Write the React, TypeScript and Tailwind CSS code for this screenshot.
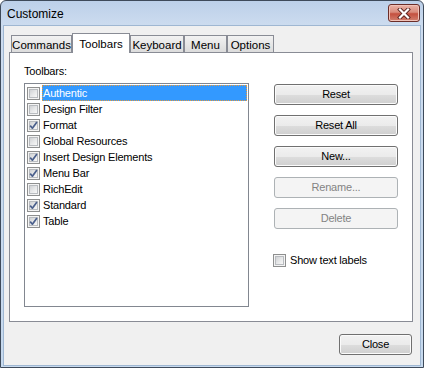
import React from "react";

const items: { label: string; checked: boolean }[] = [
  { label: "Authentic", checked: false },
  { label: "Design Filter", checked: false },
  { label: "Format", checked: true },
  { label: "Global Resources", checked: false },
  { label: "Insert Design Elements", checked: true },
  { label: "Menu Bar", checked: true },
  { label: "RichEdit", checked: false },
  { label: "Standard", checked: true },
  { label: "Table", checked: true },
];

const tabs = ["Commands", "Toolbars", "Keyboard", "Menu", "Options"];
const tabWidths: Record<string, string> = {
  Commands: "w-[61px]",
  Toolbars: "w-[58px]",
  Keyboard: "w-[54px]",
  Menu: "w-[43px]",
  Options: "w-[47px]",
};

function CheckBox({ checked }: { checked: boolean }) {
  return (
    <div className="relative w-[13px] h-[13px] shrink-0 border border-[#8e8f8f] bg-[#f4f4f4]">
      <div className="absolute inset-[1px] border border-[#b9bcc0] bg-[linear-gradient(135deg,#d0d2d5_0%,#e6e7e8_50%,#f7f7f7_100%)]" />
      {checked && (
        <svg className="absolute inset-0" width="11" height="11" viewBox="0 0 11 11">
          <path d="M2.2 5.6 L4.4 8.2 L8.9 1.9" fill="none" stroke="#4a5f8c" strokeWidth="1.7" strokeLinejoin="round" />
        </svg>
      )}
    </div>
  );
}

function Button({ label, disabled }: { label: string; disabled?: boolean }) {
  return (
    <div
      className={`flex items-center justify-center w-[124px] h-[21px] rounded-[3px] border ${
        disabled
          ? "border-[#adb2b5] bg-[#f4f4f4] text-[#838383]"
          : "border-[#707070] bg-[linear-gradient(#f2f2f2_0%,#ebebeb_50%,#dddddd_51%,#cfcfcf_100%)] text-black shadow-[inset_0_0_0_1px_#fbfbfb]"
      }`}
    >
      {label}
    </div>
  );
}

export default function App() {
  return (
    <div className="w-[424px] h-[368px] overflow-hidden font-['Liberation_Sans',Arial,sans-serif] text-[11px] tracking-[-0.2px] text-black">
      <div className="flex flex-col w-[424px] h-[368px] rounded-t-[6px] border border-[#3e4a5a] bg-[linear-gradient(#bcd0e9_0%,#cddcef_25px,#c6d9ee_100%)]">
        {/* Title bar */}
        <div className="flex h-[25px] shrink-0 items-start">
          <div className="pl-[6px] pt-[4px] text-[12px] tracking-normal text-black">Customize</div>
          <div className="ml-auto mr-[3px] mt-[3px] flex items-center justify-center w-[32px] h-[18px] rounded-[3px] border border-[#6b2d28] bg-[linear-gradient(#eab2a6_0%,#d98b7c_45%,#c4503f_55%,#d2806f_100%)] shadow-[inset_0_0_0_1px_#f0c2b8]">
            <svg width="14" height="11" viewBox="0 0 14 11">
              <path d="M3 1.5 L11 9.5 M11 1.5 L3 9.5" stroke="#5a2420" strokeWidth="4" strokeLinecap="square" />
              <path d="M3 1.5 L11 9.5 M11 1.5 L3 9.5" stroke="#ffffff" strokeWidth="2.2" strokeLinecap="square" />
            </svg>
          </div>
        </div>

        {/* Client */}
        <div className="flex-1 mx-[3px] mb-[2px] bg-[#f0f0f0] shadow-[0_0_0_1px_#9fb7d2] pt-[7px] pl-[5px]">
          <div className="flex items-end h-[19px] ml-[2px]">
            {tabs.map((t) => {
              const active = t === "Toolbars";
              return (
                <div
                  key={t}
                  className={`flex justify-center text-[11.5px] tracking-normal ${tabWidths[t]} ${
                    active
                      ? "relative z-10 h-[20px] -mb-px bg-white border border-b-0 border-[#898c95] pt-[2px]"
                      : "h-[17px] bg-[linear-gradient(#f2f2f2,#dcdcdc)] border border-b-0 border-[#898c95] pt-[1px]"
                  }`}
                >
                  {t}
                </div>
              );
            })}
          </div>

          <div className="w-[404px] h-[270px] border border-[#898c95] bg-white flex pt-[10px] pl-[14px]">
            <div className="flex flex-col">
              <div className="h-[16px] leading-[16px]">Toolbars:</div>
              <div className="mt-[4px] w-[225px] h-[224px] border border-[#828790] bg-white pt-[1px]">
                {items.map((it, i) => (
                  <div key={it.label} className="flex items-center h-[16px] pl-[2px]">
                    <CheckBox checked={it.checked} />
                    {i === 0 ? (
                      <div className="ml-[2px] mr-px flex-1 h-[16px] leading-[14px] bg-[#3399ff] text-white border border-dotted border-[#e89a3c]">
                        {it.label}
                      </div>
                    ) : (
                      <div className="ml-[3px] leading-[16px]">{it.label}</div>
                    )}
                  </div>
                ))}
              </div>
            </div>

            <div className="ml-[25px] mt-[21px] flex flex-col gap-[10px]">
              <Button label="Reset" />
              <Button label="Reset All" />
              <Button label="New..." />
              <Button label="Rename..." disabled />
              <Button label="Delete" disabled />
              <div className="mt-[13px] -ml-px flex items-center h-[16px] gap-[4px]">
                <CheckBox checked={false} />
                <span className="leading-[16px]">Show text labels</span>
              </div>
            </div>
          </div>

          <div className="flex justify-end pr-[8px] mt-[12px]">
            <div className="flex items-center justify-center w-[73px] h-[21px] rounded-[3px] border border-[#707070] bg-[linear-gradient(#f2f2f2_0%,#ebebeb_50%,#dddddd_51%,#cfcfcf_100%)] shadow-[inset_0_0_0_1px_#fbfbfb]">
              Close
            </div>
          </div>
        </div>
      </div>
    </div>
  );
}
